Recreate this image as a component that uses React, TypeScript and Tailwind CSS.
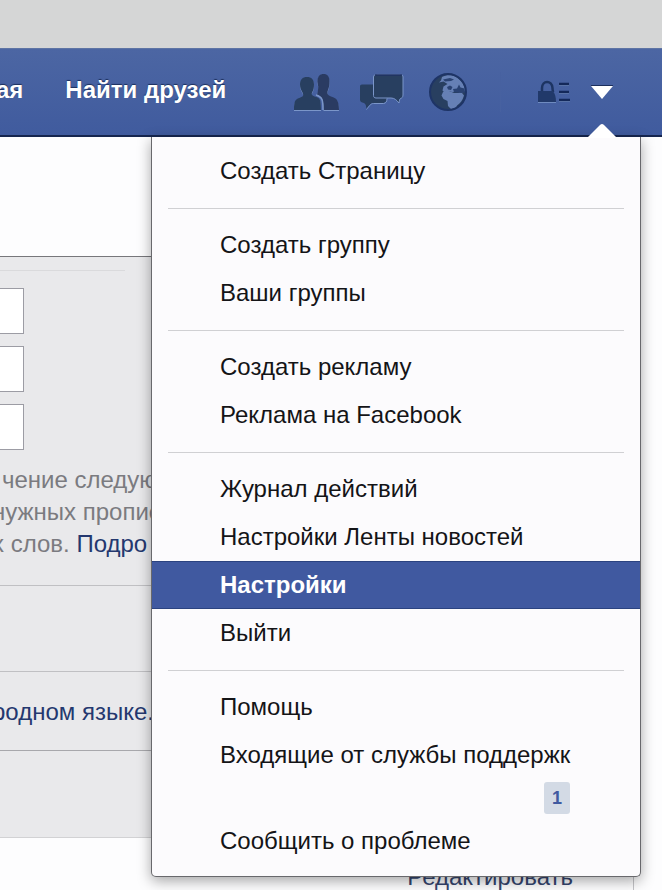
const menuGroups = [
  ['Создать Страницу'],
  ['Создать группу', 'Ваши группы'],
  ['Создать рекламу', 'Реклама на Facebook'],
  ['Журнал действий', 'Настройки Ленты новостей', 'Настройки', 'Выйти'],
  ['Помощь', 'Входящие от службы поддержк', 'Сообщить о проблеме'],
]

const activeItem = 'Настройки'
const badges: Record<string, number> = { 'Входящие от службы поддержк': 1 }

const friendLeft =
  'M14 4c4.500 0 7 2.500 7 7.500 0 3-.5 5.500-1.700 7.500-.8 1.500-.8 3 .7 3.800 2 1 4.500 1.200 6 2.700C27.500 27 28 30 28 37H1c0-6 .5-9.500 3-11 2-1.200 4-1.600 5.500-2.500 1-.7.800-2.500 0-4C8 17 7 14.500 7 11.500 7 6.500 9.500 4 14 4z'
const friendRight =
  'M30.500 1c4 0 6 2.500 6 7.500 0 3.500-.5 6-1.500 8.500-.8 2-1 4 .3 5 1.700 1.300 5 2 7.200 3.500C45 27.500 46 31 46 37H30.500c0-6-.2-10.500-3-13-1-1-2.500-1.500-3.500-2 .5-2.500 1.200-4.500 1.200-8.500C25 11 24 9 24.500 7 25.200 3 27 1 30.500 1z'

function FriendsIcon() {
  return (
    <svg width="46" height="38" viewBox="0 0 46 38" aria-hidden="true">
      <g fill="#7b96c9" transform="translate(0 1)">
        <path d={friendRight} />
        <path d={friendLeft} />
      </g>
      <path d={friendRight} fill="#2a3b62" />
      <path d={friendLeft} fill="#283f60" />
      <path d="M23 22c3.500 1 5 2 6 4.500.8 2 1 5 1 10.500" fill="none" stroke="#7b96c9" strokeWidth="1.500" />
    </svg>
  )
}

function MessagesIcon() {
  return (
    <svg width="45" height="38" viewBox="0 0 45 38" aria-hidden="true">
      <path
        d="M3 11.500h12v13h13c0 3.500-1 5-3.500 5.500H14.500c-3 0-4.500 2.500-7 6-.5-3-.5-5-2.500-6C2.500 29.500 1 29 1 26.500V13.500c0-1.300.7-2 2-2z"
        fill="#283f60"
      />
      <path d="M28 25.500c0 3-1 4.800-3.500 5h-10c-3 0-4.500 3-7 6" fill="none" stroke="#7b96c9" />
      <path
        d="M17.500 1.500h24c1.700 0 2.500 1 2.500 2.500v18c0 2-1 3-2.500 3.500-1 .4-1 2.500-1.500 4.500-2.500-3-4.500-5-8-5H17c-1.700 0-2.500-1-2.500-2.500V4c0-1.500 1.200-2.500 3-2.500z"
        fill="#283f60"
        stroke="#7b96c9"
      />
      <path d="M16 2h27" stroke="#1f3263" strokeWidth="1.500" />
    </svg>
  )
}

function GlobeIcon() {
  return (
    <svg width="40" height="40" viewBox="0 0 40 40" aria-hidden="true">
      <circle cx="20" cy="20" r="18" fill="#283f60" />
      {/* Europe */}
      <path
        fill="#6680b5"
        d="M14 5c4-2.500 10-2.500 14 0 5 3 9 8.500 9 14l-4 2-4-1.500-5 .5-3-1-4 2-2.500-2.500 1-4 4-2.500-4-2.500-4.500 1 2-2z"
      />
      {/* Africa */}
      <path fill="#6680b5" d="M15 20l5-1.500 6 2.500 8 0 2 2.500c-1.500 5-4 8-7 10l-1 2.500-5 1-3-3-.5-5-4-2-2-3.500z" />
      <path fill="#2a4272" d="M15 7.500l7-1.500 4 1.500-3 1.500-6 .5zM19 15l3-1.500 2.500 1.500-1.500 3-3-.5zM25 17l4-.5 2-4 1.500 3 4 1 .5 4-4 .5-7-1z" />
      <circle cx="20" cy="20" r="18" fill="none" stroke="#1e3466" strokeWidth="2" />
    </svg>
  )
}

function PrivacyIcon() {
  return (
    <svg width="34" height="24" viewBox="0 0 34 24" aria-hidden="true">
      <path d="M5 12V8c0-8 10-8 10.500 0 0 2 .5 3 .5 4" fill="none" stroke="#1d3462" strokeWidth="2.500" />
      <path d="M1 11h15c2 3 3 6 3 11H1z" fill="#21396a" />
      <path d="M1 22.500h18M22 5.500h10M22 13.500h10M22 21.500h11" stroke="#6f8bc0" />
      <path d="M22 4h10M22 12h10M22 20h11" stroke="#14295a" strokeWidth="2.500" />
    </svg>
  )
}

function AccountMenu() {
  return (
    <div className="absolute top-full right-[21px] z-10 mt-0.5 w-[490px] rounded-b-[5px] border border-t-0 border-[#68686c] bg-[#fcfbfd] pt-2.5 pb-[11px] shadow-[0_4px_14px_rgba(0,0,0,0.35)]">
      {/* Pointer up to the arrow button */}
      <svg className="absolute -top-[14px] right-[23px]" width="30" height="15" viewBox="0 0 30 15" aria-hidden="true">
        <path d="M0 15L13 2q2-2 4 0l13 13z" fill="#fff" />
      </svg>
      {menuGroups.map((group, i) => (
        <ul key={i}>
          {i > 0 && <li role="separator" className="mx-4 mt-[13px] mb-3 h-px bg-[#d0d0d3]" />}
          {group.map((item) => (
            <li key={item}>
              <a
                href="#"
                className={
                  item === activeItem
                    ? 'block h-12 border-y border-[#2b4380] bg-[#4059a0] pl-[68px] leading-[46px] font-bold text-white'
                    : 'block h-12 pl-[68px] leading-[48px] whitespace-nowrap text-[#141417]'
                }
              >
                {item}
              </a>
              {badges[item] && (
                <div className="flex h-[38px] items-center justify-end pr-[70px]">
                  <span className="h-8 w-[26px] rounded-[3px] bg-[#d3dae5] text-center text-lg leading-8 font-bold text-[#4059a0]">
                    {badges[item]}
                  </span>
                </div>
              )}
            </li>
          ))}
        </ul>
      ))}
    </div>
  )
}

export default function App() {
  return (
    <div className="min-h-screen overflow-hidden bg-[#fdfdfe] font-['Liberation_Sans',Arial,sans-serif] text-2xl">
      <div className="h-12 bg-[#d5d6d6]" />

      <header className="relative border-t border-b-2 border-t-[#5e74a4] border-b-[#16264f] bg-linear-to-b from-[#4c66a3] to-[#405b9e]">
        <nav className="flex h-[86px] items-center">
          <div className="-ml-1 flex gap-[42px] pb-1 font-bold whitespace-nowrap text-white [text-shadow:0_-1px_1px_#1c2f5c]">
            <a href="#">ая</a>
            <a href="#">Найти друзей</a>
          </div>
          <div className="ml-auto flex items-center pr-[49px]">
            <button type="button" aria-label="Запросы на добавление в друзья">
              <FriendsIcon />
            </button>
            <button type="button" aria-label="Сообщения" className="ml-5">
              <MessagesIcon />
            </button>
            <button type="button" aria-label="Уведомления" className="ml-6">
              <GlobeIcon />
            </button>
            <span className="ml-8 h-10 w-px bg-[#4761a0]" />
            <button type="button" aria-label="Настройки конфиденциальности" className="ml-9">
              <PrivacyIcon />
            </button>
            <button type="button" aria-label="Меню аккаунта" className="ml-5">
              <svg width="22" height="14" viewBox="0 0 22 14" aria-hidden="true">
                <path d="M0 .5h22" stroke="#1c2f5c" />
                <path d="M0 1h22L11 14z" fill="#fff" />
              </svg>
            </button>
          </div>
        </nav>
        <AccountMenu />
      </header>

      <main className="mr-7 border-r border-[#c4c4c8]">
        <div className="h-[119px]" />

        <section className="border-y border-t-[#77777b] border-b-[#d2d2d4] bg-[#e9e9eb]">
          <div className="mr-[508px] h-3.5 border-b border-[#dadadc]" />
          <div className="mt-[17px] flex flex-col gap-3">
            <input aria-label="Текущий" className="-ml-1 h-[46px] w-7 border border-[#9c9ca4] bg-white" />
            <input aria-label="Новый" className="-ml-1 h-[46px] w-7 border border-[#9c9ca4] bg-white" />
            <input aria-label="Повторите новый" className="-ml-1 h-[46px] w-7 border border-[#9c9ca4] bg-white" />
          </div>
          <p className="-ml-2 mt-3.5 indent-[10px] leading-8 whitespace-nowrap text-[#7b7b80]">
            чение следую
            <br />
            нужных пропис
            <br />
            х слов.{' '}
            <a href="#" className="text-[#24386f]">
              Подро
            </a>
          </p>
          <div className="mt-[25px] h-[86px] border-t border-[#c0c0c3]" />
          <div className="h-20 border-y border-t-[#c0c0c3] border-b-[#a8a8ac] leading-[80px]">
            <a href="#" className="-ml-2 text-[#24386f]">
              родном языке.
            </a>
          </div>
          <div className="h-[86px]" />
        </section>

        <div className="flex h-[53px] items-end justify-end overflow-hidden pr-[60px]">
          <a href="#" className="leading-7 text-[#35456e]">
            Редактировать
          </a>
        </div>
      </main>
    </div>
  )
}
